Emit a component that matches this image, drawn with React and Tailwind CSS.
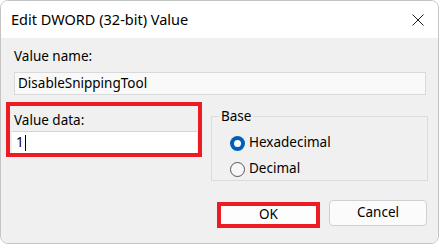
import React from "react";

const font = { fontFamily: '"Noto Sans", "Liberation Sans", sans-serif' };

function Radio({ checked, label }) {
  return (
    <label className="flex items-center gap-[4px] h-[26px]">
      {checked ? (
        <span className="w-[15px] h-[15px] rounded-full bg-[#005fb8] flex items-center justify-center">
          <span className="w-[7px] h-[7px] rounded-full bg-white" />
        </span>
      ) : (
        <span className="w-[15px] h-[15px] rounded-full border border-[#555] bg-[#f7f7f7]" />
      )}
      <span className="text-[13.5px] text-black leading-none">{label}</span>
    </label>
  );
}

export default function App() {
  return (
    <div className="w-[440px] h-[245px] bg-white" style={font}>
      <div className="w-[439px] h-[244px] rounded-[8px] border border-[#c4c4c4] overflow-hidden flex flex-col">
        <div className="h-[37px] bg-white flex items-center justify-between pl-[10px] pr-[14px] shrink-0">
          <span className="text-[14.5px] text-black">Edit DWORD (32-bit) Value</span>
          <svg width="12" height="12" viewBox="0 0 12 12" className="mt-[1px]">
            <path d="M0.5 0.5 L11.5 11.5 M11.5 0.5 L0.5 11.5" stroke="#1a1a1a" strokeWidth="1" />
          </svg>
        </div>
        <div className="flex-1 bg-[#f0f0f0] pt-[8px] px-[5px]">
          <div className="pl-[8px] text-[13.5px] leading-[20px] text-black">Value name:</div>
          <div className="ml-[8px] mt-[6px] w-[412px] h-[23px] bg-[#f9f9f9] border border-[#d9d9d9] flex items-center px-[3px] text-[13.5px] text-black">
            DisableSnippingTool
          </div>
          <div className="flex mt-[7px]">
            <div className="w-[196px] h-[55px] border-[4px] border-[#ed1c24] pt-[5px] pl-[2px] pr-[1px]">
              <div className="pl-[2px] text-[13.5px] leading-[18px] text-black">Value data:</div>
              <div className="mt-[2px] h-[22px] bg-white border-t border-[#d4d4d4] flex items-center pl-[4px] text-[13.5px] text-black">
                1<span className="w-[1px] h-[16px] bg-black ml-[1px]" />
              </div>
            </div>
            <fieldset className="ml-[9px] mt-[6px] w-[217px] h-[73px] border border-[#dcdcdc] pt-[6px]">
              <legend className="ml-[7px] px-[2px] text-[13.5px] leading-[16px] text-black">Base</legend>
              <div className="pl-[18px]">
                <Radio checked label="Hexadecimal" />
                <Radio label="Decimal" />
              </div>
            </fieldset>
          </div>
          <div className="flex justify-end gap-[9px] pr-[6px] mt-[19px] items-start">
            <button className="w-[103px] h-[26px] mt-[2px] border-[4px] border-[#ed1c24] bg-[#fdfdfd] text-[13.5px] text-black leading-none">
              OK
            </button>
            <button className="w-[98px] h-[26px] rounded-[4px] border border-[#d0d0d0] bg-[#fbfbfb] text-[13.5px] text-black leading-none">
              Cancel
            </button>
          </div>
        </div>
      </div>
    </div>
  );
}
